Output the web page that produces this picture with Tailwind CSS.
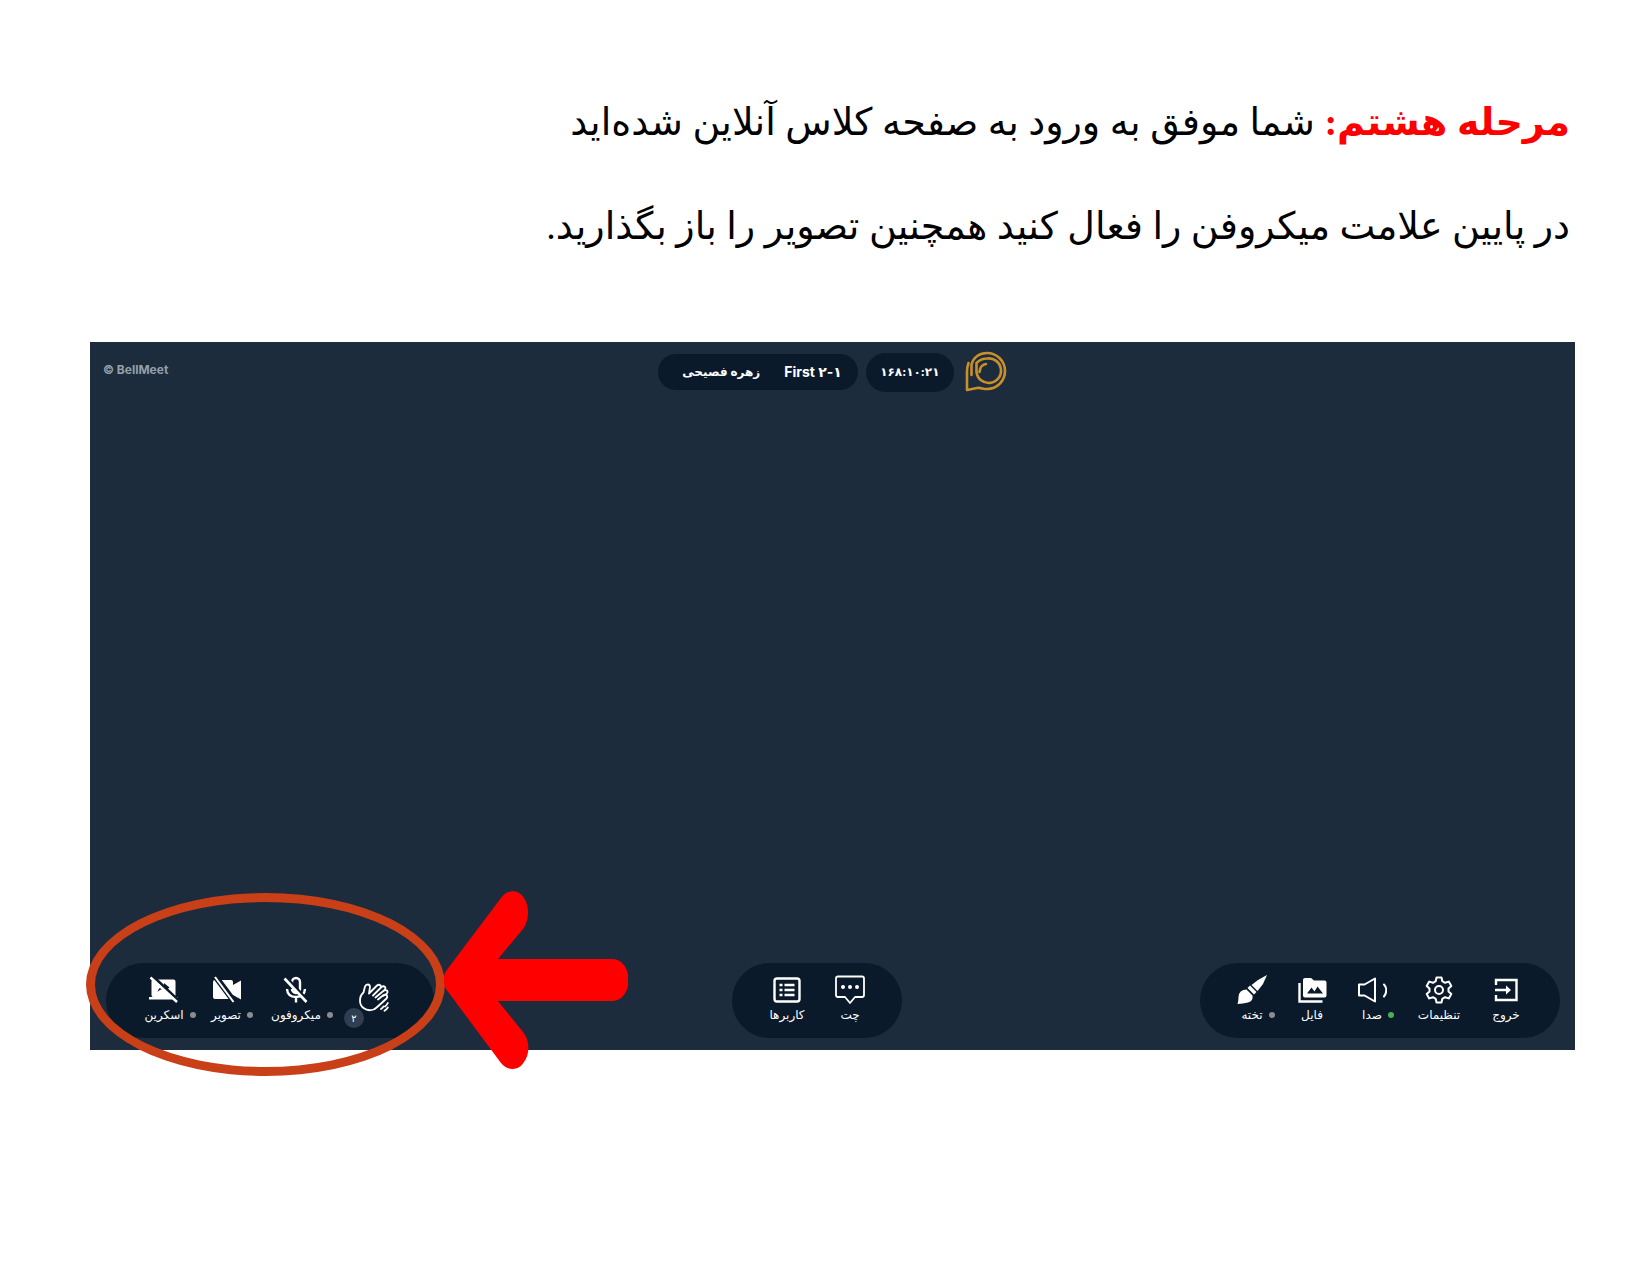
<!doctype html>
<html lang="fa" dir="rtl">
  <head>
    <meta charset="UTF-8" />
    <meta name="viewport" content="width=device-width, initial-scale=1.0" />
    <title>BellMeet</title>
    <script src="https://cdn.jsdelivr.net/npm/@tailwindcss/browser@4"></script>
  </head>
  <body class="bg-white min-h-screen font-['Liberation_Serif','DejaVu_Sans',serif] text-black">
    <main class="pl-[90px] pr-[75px] pt-[70px] pb-20">
      <div class="pr-[5px] text-[38px] leading-[104px]">
        <p><strong class="font-bold text-[#ff0000]">مرحله هشتم:</strong> شما موفق به ورود به صفحه کلاس آنلاین شده‌اید</p>
        <p>در پایین علامت میکروفن را فعال کنید همچنین تصویر را باز بگذارید.</p>
      </div>

      <!-- Class room -->
      <section class="relative mt-16 aspect-[1485/708] bg-[#1d2c3c] flex flex-col justify-between text-white font-[Inter,'DejaVu_Sans',sans-serif]">
        <header class="relative flex justify-center pt-[9px]">
          <div class="flex items-center gap-2">
            <svg class="w-[42px] h-[42px] me-[3px]" viewBox="0 0 42 42" fill="none" stroke="#c8902a" stroke-width="2.6" stroke-linecap="round" stroke-linejoin="round">
              <path d="M6.500 24V14C8 6 15 2 22 2A17.500 17.500 0 1 1 22 38C18 38 16 36.500 12 37L2 39V21Q2 16 3.500 12" />
              <path d="M11.500 21V12Q16 7.500 22 7.500A12.300 12.300 0 1 1 11.500 21" />
              <path d="M14.500 21Q15 14 21 13" />
            </svg>
            <span dir="ltr" class="w-22 h-[39px] rounded-full bg-[#0b1a2b] flex items-center justify-center text-xs font-bold">۱۶۸:۱۰:۲۱</span>
            <span class="h-9 px-4 rounded-full bg-[#0b1a2b] flex items-center gap-6 text-sm font-bold">
              <span dir="ltr">First ۲-۱</span>
              <span class="pl-2 text-xs">زهره فصیحی</span>
            </span>
          </div>
          <span dir="ltr" class="absolute left-[13px] top-5 text-xs leading-4 font-bold text-[#94a0ab]">© BellMeet</span>
        </header>

        <footer class="flex justify-between pl-4 pr-[15px] pb-3 text-xs leading-4">
          <nav class="h-[75px] rounded-full bg-[#0a1a2b] flex pt-3 pr-[22px] pl-5">
            <button class="w-16 flex flex-col items-center gap-0.5">
              <svg class="size-[30px]" viewBox="0 0 30 30" fill="none" stroke="#fff" stroke-width="2.4">
                <path d="M5 10V5H25.500V25H5V20M4 15H18" />
                <path d="M15 10.500L20 15L15 19.500Z" fill="#fff" stroke="none" />
              </svg>
              <span>خروج</span>
            </button>
            <button class="w-[70px] flex flex-col items-center gap-0.5">
              <svg class="size-[30px]" viewBox="0 0 30 30" fill="none" stroke="#fff" stroke-width="2" stroke-linejoin="round">
                <path d="M12.500 2.500H17.500L18.300 6.200L21 7.800L24.800 6.600L27.300 10.900L24.500 13.500V16.500L27.300 19.100L24.800 23.400L21 22.200L18.300 23.800L17.500 27.500H12.500L11.700 23.800L9 22.200L5.200 23.400L2.700 19.100L5.500 16.500V13.500L2.700 10.900L5.200 6.600L9 7.800L11.700 6.200Z" />
                <circle cx="15" cy="15" r="4" />
              </svg>
              <span>تنظیمات</span>
            </button>
            <button class="w-16 flex flex-col items-center gap-0.5">
              <svg class="size-[30px]" viewBox="0 0 30 30" fill="none" stroke="#fff" stroke-width="2" stroke-linejoin="round" stroke-linecap="round">
                <path d="M2 9.500H7.500L18 3.500V26.500L7.500 20.500H2Z" />
                <path d="M27 9.500C30 12.500 30 18 27 21.500" />
              </svg>
              <span class="flex items-center gap-1.5"><i class="size-1.5 -ms-3 rounded-full bg-[#4caf50]"></i>صدا</span>
            </button>
            <button class="w-14 flex flex-col items-center gap-0.5">
              <svg class="size-[30px]" viewBox="0 0 30 30">
                <path d="M8 3H14L17 5.500H27.500Q29.500 5.500 29.500 7.500V20.500Q29.500 22.500 27.500 22.500H8Q6 22.500 6 20.500V5Q6 3 8 3Z" fill="#fff" />
                <path d="M10 18.500L14.500 12.500L17.500 16.500L20.500 11.500L26 18.500Z" fill="#0a1a2b" />
                <path d="M2.500 8V26.500H25.500" fill="none" stroke="#fff" stroke-width="2.4" />
              </svg>
              <span>فایل</span>
            </button>
            <button class="w-16 flex flex-col items-center gap-0.5">
              <svg class="size-[30px]" viewBox="0 0 30 30" fill="#fff">
                <path d="M30 0L26 9L20.500 16L14.500 10L21 5Z" />
                <path d="M13 10.500L19.500 17L17 19.500L10.500 13Z" />
                <path d="M9.500 14.500L15.500 20.500Q16.500 26 11 27.500Q6 28.500 0.500 29Q1.500 26 1.500 22Q2 14.500 9.500 14.500Z" />
              </svg>
              <span class="flex items-center gap-1.5"><i class="size-1.5 -ms-3 rounded-full bg-[#8a8c90]"></i>تخته</span>
            </button>
          </nav>

          <nav class="h-[75px] rounded-full bg-[#0a1a2b] flex pt-3 pr-5 pl-6">
            <button class="w-16 flex flex-col items-center gap-0.5">
              <svg class="size-[30px]" viewBox="0 0 30 30" fill="none" stroke="#fff" stroke-width="1.8" stroke-linejoin="round">
                <path d="M3 1.500H27Q29 1.500 29 3.500V20Q29 22 27 22H20L15 28L10 22H3Q1 22 1 20V3.500Q1 1.500 3 1.500Z" />
                <path d="M8 12h.01M15 12h.01M22 12h.01" stroke-width="4" stroke-linecap="round" />
              </svg>
              <span>چت</span>
            </button>
            <button class="w-[62px] flex flex-col items-center gap-0.5">
              <svg class="size-[30px]" viewBox="0 0 30 30" fill="none" stroke="#fff" stroke-width="2.4">
                <rect x="2.500" y="3.500" width="25" height="23" rx="2.500" />
                <path d="M7.500 10H10.500M12.500 10H22.500M7.500 15H10.500M12.500 15H22.500M7.500 20H10.500M12.500 20H22.500" />
              </svg>
              <span>کاربرها</span>
            </button>
          </nav>

          <nav class="h-[75px] rounded-full bg-[#0a1a2b] flex pt-3 pr-7 pl-6">
            <button class="relative w-[68px] flex justify-center pt-2" aria-label="دست">
              <svg class="size-[30px] me-1" viewBox="0 0 30 30" fill="none" stroke="#fff" stroke-width="1.8" stroke-linecap="round" stroke-linejoin="round">
                <path d="M10 10.500L11 4Q11 1.500 8.800 1.500Q6.800 1.500 6 3.500L4.500 9.500Q1 12.500 1 17.500Q1 22.500 4.500 25Q9 28.500 14.500 26.500Q17 25.500 21 21.500L27.500 15.500Q29 13.500 27.500 12.300Q26 11 24 12.500L19 16.500M10 10.500L18 2.500Q20 1 21.500 2.500Q22.500 4 21 5.500L14 12.500M21 5.500L22.500 4Q24.500 2.500 26 4Q27 5.500 25.500 7L16.500 14.500M25.500 7.500Q27.500 6.500 28.300 8Q29 9.500 27.500 11L24 13" />
                <path d="M28.800 20Q28 22 26 23.500M28.800 24.500Q27.500 26.500 25.500 27.800M24.500 23.500Q23.500 25 22 26" />
              </svg>
              <span class="absolute left-1.5 top-[33px] size-5 rounded-full bg-[#2f3e50] flex items-center justify-center text-[10px]">۲</span>
            </button>
            <button class="w-[84px] flex flex-col items-center gap-0.5">
              <svg class="size-[30px]" viewBox="0 0 30 30" fill="none" stroke="#fff" stroke-width="2.400">
                <path d="M11 11V7A4 4 0 0 1 19 7V14Q19 18 15 18Q11 17 11 14M6 14Q6.500 22 15 22Q23.500 22 24 14M15 22V27.500" />
                <path d="M5 2L27 26" stroke="#0a1a2b" stroke-width="3" />
                <path d="M3.500 3.500L25.500 27" stroke-width="2.600" />
              </svg>
              <span class="flex items-center gap-1.5"><i class="size-1.5 -ms-3 rounded-full bg-[#8a8c90]"></i>میکروفون</span>
            </button>
            <button class="w-14 flex flex-col items-center gap-0.5">
              <svg class="size-[30px]" viewBox="0 0 30 30">
                <path d="M4 5H20Q22 5 22 7V10L30 5.500V24.500L22 20V22Q22 24 20 24H4Q2 24 2 22V7Q2 5 4 5Z" fill="#fff" />
                <path d="M4 1L23.500 27" stroke="#0a1a2b" stroke-width="6" />
                <path d="M4 2L22.500 27" stroke="#fff" stroke-width="2" />
              </svg>
              <span class="flex items-center gap-1.5"><i class="size-1.5 -ms-3 rounded-full bg-[#8a8c90]"></i>تصویر</span>
            </button>
            <button class="w-[68px] flex flex-col items-center gap-0.5">
              <svg class="size-[30px]" viewBox="0 0 30 30">
                <path d="M4 4.500H24.500Q26.500 4.500 26.500 6.500V20Q26.500 22 25 22H28.500V24.500H0V22H4Q2.500 22 2.500 20V6.500Q2.500 4.500 4 4.500Z" fill="#fff" />
                <path d="M8.500 17Q10 11.500 15 11V8L20.500 12.500L15 17V14Q11 14 8.500 17Z" fill="#0a1a2b" />
                <path d="M3 0.500L29.500 25.500" stroke="#0a1a2b" stroke-width="3" />
                <path d="M1.500 2.500L28 27" stroke="#fff" stroke-width="2.400" />
              </svg>
              <span class="flex items-center gap-1.5"><i class="size-1.5 -ms-3 rounded-full bg-[#8a8c90]"></i>اسکرین</span>
            </button>
          </nav>
        </footer>

        <!-- Marks drawn over the room -->
        <div class="absolute -left-1 -bottom-[26px] w-[359px] h-[183px] rounded-[50%] border-[9px] border-[#c93f17] pointer-events-none"></div>
        <svg class="absolute left-[354px] -bottom-[19px] w-[184px] h-[178px]" viewBox="0 0 184 178" fill="#ff0000">
          <path d="M2 80L57 7C63 -2 75 -2 80 7C86 16 85 30 79 38L54 68H168C190 68 190 110 168 110H54L79 141C86 149 86 163 80 171C75 180 63 180 57 172L2 98C-1 93 -1 85 2 80Z" />
        </svg>
      </section>
    </main>
  </body>
</html>
